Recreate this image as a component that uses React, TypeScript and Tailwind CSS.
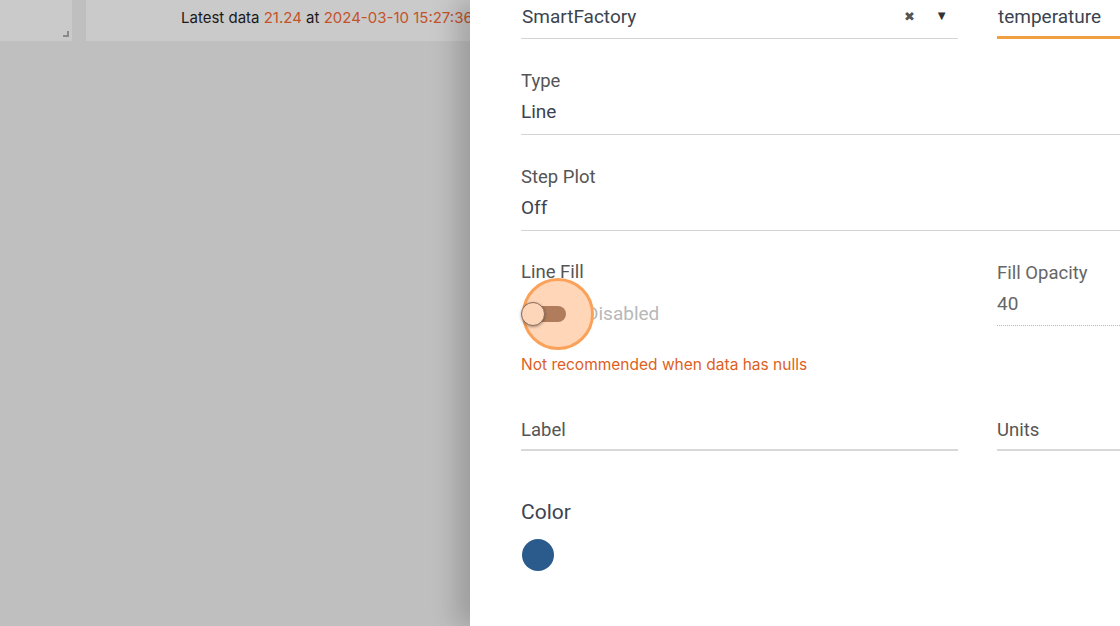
import React from 'react';

const font = { fontFamily: 'Roboto, "Noto Sans", sans-serif' };

const App: React.FC = () => {
  return (
    <div className="relative w-[1120px] h-[626px] overflow-hidden bg-[#bfbfbf]" style={font}>
      {/* dimmed dashboard behind */}
      <div className="flex h-[41px] gap-[14px]">
        <div className="relative w-[72px] h-full bg-[#cacaca]">
          <div className="absolute right-[3px] bottom-[4px] w-[6px] h-[6px] border-r-2 border-b-2 border-[#8a8a8a]" />
        </div>
        <div className="flex-1 h-full bg-[#cacaca] flex items-start pt-[7px] pl-[95px] text-[15px] text-[#1a1a1a] whitespace-nowrap" style={{ fontFamily: 'Inter, sans-serif' }}>
          Latest data&nbsp;<span className="text-[#c4532a]">21.24</span>&nbsp;at&nbsp;
          <span className="text-[#c4532a]">2024-03-10 15:27:36</span>
        </div>
      </div>

      {/* drawer */}
      <div className="absolute top-0 left-[470px] w-[650px] h-[626px] bg-white shadow-[-14px_0_24px_rgba(0,0,0,0.18)]">
        <div className="pl-[51px] text-[19px] text-[#3c4350]">
          {/* source / measurement */}
          <div className="flex">
            <div className="w-[437px] h-[39px] border-b border-[#d4d4d4] flex items-start pt-[3px] pl-[1px]">
              <span className="flex-1 text-[#3c4350]">SmartFactory</span>
              <span className="text-[#555] text-[13px] mt-[4px] mr-[20px]">✖</span>
              <span className="text-[#333] text-[13px] mt-[3px] mr-[10px]">▼</span>
            </div>
            <div className="ml-[39px] flex-1 h-[39px] border-b-[3px] border-[#f0a040] pt-[3px] pl-[1px]">temperature</div>
          </div>

          {/* Type */}
          <div className="mt-[30px] border-b border-[#d4d4d4] pb-[10px]">
            <div className="text-[#555] text-[18.5px] leading-[24px]">Type</div>
            <div className="mt-[7px] leading-[24px]">Line</div>
          </div>

          {/* Step Plot */}
          <div className="mt-[30px] border-b border-[#d4d4d4] pb-[10px]">
            <div className="text-[#555] text-[18.5px] leading-[24px]">Step Plot</div>
            <div className="mt-[7px] leading-[24px]">Off</div>
          </div>

          {/* Line Fill / Fill Opacity */}
          <div className="flex mt-[29px]">
            <div className="w-[437px]">
              <div className="text-[#555] text-[18.5px] leading-[24px]">Line Fill</div>
              <div className="relative flex items-center h-[32px] mt-[14px]">
                <div className="relative w-[44px] h-[32px] flex items-center">
                  <div className="absolute left-[1px] top-[-20px] w-[72px] h-[72px] rounded-full bg-[#ffd6b8] border-[3px] border-[#fba25a]" />
                  <div className="absolute left-[2px] w-[43px] h-[16px] rounded-full bg-[#b07c5b]" />
                  <div className="absolute left-[0px] w-[24px] h-[24px] rounded-full bg-[#fdd5b8] border-[1.5px] border-[#8a6a5a] shadow-[0_1px_3px_rgba(0,0,0,0.35)]" />
                </div>
                <span className="ml-[21px] text-[#b8b8b8]">Disabled</span>
              </div>
              <div className="mt-[23px] text-[15.5px] text-[#dd5f22]" style={{ fontFamily: 'Inter, sans-serif' }}>Not recommended when data has nulls</div>
            </div>
            <div className="ml-[39px] flex-1">
              <div className="text-[#666] text-[18.5px] leading-[24px] pt-[1px]">Fill Opacity</div>
              <div className="mt-[7px] leading-[24px] text-[#666] pb-[9px] border-b border-dotted border-[#bbbbbb]">40</div>
            </div>
          </div>

          {/* Label / Units */}
          <div className="flex mt-[42px]">
            <div className="w-[437px] border-b-2 border-[#d8d8d8] pb-[7px] text-[#555] text-[18.5px] leading-[24px]">Label</div>
            <div className="ml-[39px] flex-1 border-b-2 border-[#d8d8d8] pb-[7px] text-[#555] text-[18.5px] leading-[24px]">Units</div>
          </div>

          {/* Color */}
          <div className="mt-[47px] text-[21px] text-[#3c4350] leading-[28px]">Color</div>
          <div className="mt-[13px] ml-[1px] w-[32px] h-[32px] rounded-full bg-[#2b5b8c]" />
        </div>
      </div>
    </div>
  );
};

export default App;
